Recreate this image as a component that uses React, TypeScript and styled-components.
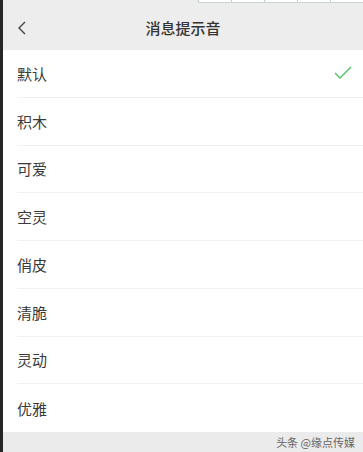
import React, { FC } from "react";
import styled, { createGlobalStyle } from "styled-components";

const GlobalStyle = createGlobalStyle`
    html, body {
        margin: 0;
        padding: 0;
        background: #ffffff;
        font-family: "Noto Sans CJK SC", "Noto Sans", sans-serif;
    }
`;

const Screen = styled.div`
    display: flex;
    width: 363px;
    height: 452px;
    overflow: hidden;
`;

const EdgeStrip = styled.div`
    width: 3px;
    flex-shrink: 0;
    background: #262626;
`;

const Main = styled.div`
    flex: 1;
    display: flex;
    flex-direction: column;
    min-width: 0;
`;

const Header = styled.header`
    height: 50px;
    background: #ededed;
    display: flex;
    flex-direction: column;
`;

const TopGrid = styled.div`
    height: 3px;
    display: flex;
    justify-content: flex-end;
`;

const GridCell = styled.div`
    width: 33px;
    background: #ffffff;
    border-left: 1px solid #c9d3ce;
    border-bottom: 1px solid #c9d3ce;
    box-sizing: border-box;
`;

const TitleBar = styled.div`
    flex: 1;
    display: grid;
    grid-template-columns: 40px 1fr 40px;
    align-items: center;
    padding-top: 2px;
`;

const BackButton = styled.div`
    display: flex;
    align-items: center;
    padding-left: 13px;
`;

const Title = styled.h1`
    margin: 0;
    text-align: center;
    font-size: 15px;
    font-weight: 500;
    color: #333;
`;

const List = styled.ul`
    list-style: none;
    margin: 0;
    padding: 0 0 0 14px;
    display: flex;
    flex-direction: column;
`;

const Row = styled.li<{ last?: boolean }>`
    height: 47.75px;
    box-sizing: border-box;
    display: flex;
    align-items: center;
    justify-content: space-between;
    padding-right: 11px;
    border-bottom: ${({ last }) => (last ? "none" : "1px solid #f1f1f1")};
    font-size: 15px;
    color: #3a3a3a;
`;

const Footer = styled.footer`
    flex: 1;
    background: #ebebeb;
    display: flex;
    align-items: center;
    justify-content: flex-end;
    padding-right: 8px;
    font-size: 11px;
    color: #666;
`;

const tones = ["默认", "积木", "可爱", "空灵", "俏皮", "清脆", "灵动", "优雅"];

const Chevron = () => (
    <svg width="12" height="16" viewBox="0 0 12 16">
        <path d="M9 2 L3 8 L9 14" fill="none" stroke="#444" strokeWidth="1.4" />
    </svg>
);

const Check = () => (
    <svg width="18" height="14" viewBox="0 0 18 14">
        <path d="M1 7 L6 12 L17 1" fill="none" stroke="#5ac46a" strokeWidth="1.5" />
    </svg>
);

const App: FC = () => (
    <>
        <GlobalStyle />
        <Screen>
            <EdgeStrip />
            <Main>
                <Header>
                    <TopGrid>
                        {[0, 1, 2, 3, 4].map(i => <GridCell key={i} />)}
                    </TopGrid>
                    <TitleBar>
                        <BackButton><Chevron /></BackButton>
                        <Title>消息提示音</Title>
                        <span />
                    </TitleBar>
                </Header>
                <List>
                    {tones.map((name, i) => (
                        <Row key={name} last={i === tones.length - 1}>
                            <span>{name}</span>
                            {i === 0 && <Check />}
                        </Row>
                    ))}
                </List>
                <Footer>头条 @缘点传媒</Footer>
            </Main>
        </Screen>
    </>
);

export default App;
